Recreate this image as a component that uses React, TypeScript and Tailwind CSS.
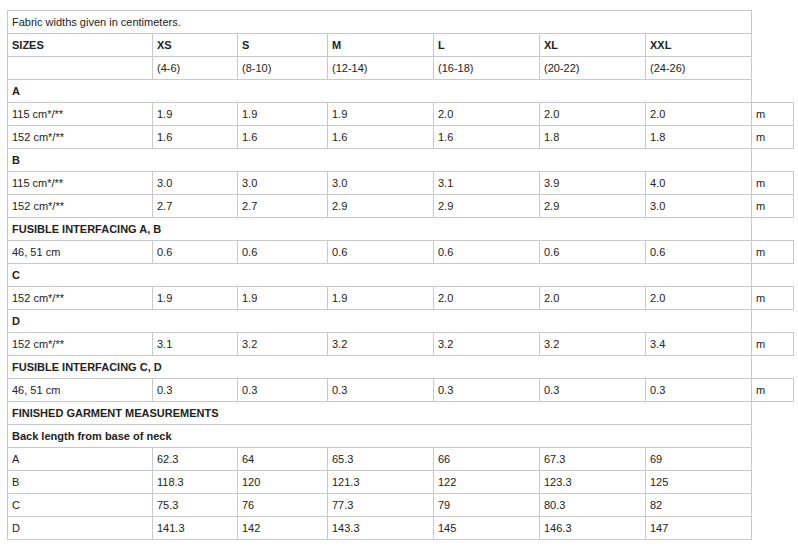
import React from 'react';

type Row =
  | { kind: 'title'; text: string }
  | { kind: 'section'; text: string }
  | { kind: 'data'; label: string; values: string[]; unit?: string; bold?: boolean };

const sizes = ['XS', 'S', 'M', 'L', 'XL', 'XXL'];
const ranges = ['(4-6)', '(8-10)', '(12-14)', '(16-18)', '(20-22)', '(24-26)'];

const rows: Row[] = [
  { kind: 'title', text: 'Fabric widths given in centimeters.' },
  { kind: 'data', label: 'SIZES', values: sizes, bold: true },
  { kind: 'data', label: '', values: ranges },
  { kind: 'section', text: 'A' },
  { kind: 'data', label: '115 cm*/**', values: ['1.9', '1.9', '1.9', '2.0', '2.0', '2.0'], unit: 'm' },
  { kind: 'data', label: '152 cm*/**', values: ['1.6', '1.6', '1.6', '1.6', '1.8', '1.8'], unit: 'm' },
  { kind: 'section', text: 'B' },
  { kind: 'data', label: '115 cm*/**', values: ['3.0', '3.0', '3.0', '3.1', '3.9', '4.0'], unit: 'm' },
  { kind: 'data', label: '152 cm*/**', values: ['2.7', '2.7', '2.9', '2.9', '2.9', '3.0'], unit: 'm' },
  { kind: 'section', text: 'FUSIBLE INTERFACING A, B' },
  { kind: 'data', label: '46, 51 cm', values: ['0.6', '0.6', '0.6', '0.6', '0.6', '0.6'], unit: 'm' },
  { kind: 'section', text: 'C' },
  { kind: 'data', label: '152 cm*/**', values: ['1.9', '1.9', '1.9', '2.0', '2.0', '2.0'], unit: 'm' },
  { kind: 'section', text: 'D' },
  { kind: 'data', label: '152 cm*/**', values: ['3.1', '3.2', '3.2', '3.2', '3.2', '3.4'], unit: 'm' },
  { kind: 'section', text: 'FUSIBLE INTERFACING C, D' },
  { kind: 'data', label: '46, 51 cm', values: ['0.3', '0.3', '0.3', '0.3', '0.3', '0.3'], unit: 'm' },
  { kind: 'section', text: 'FINISHED GARMENT MEASUREMENTS' },
  { kind: 'section', text: 'Back length from base of neck' },
  { kind: 'data', label: 'A', values: ['62.3', '64', '65.3', '66', '67.3', '69'] },
  { kind: 'data', label: 'B', values: ['118.3', '120', '121.3', '122', '123.3', '125'] },
  { kind: 'data', label: 'C', values: ['75.3', '76', '77.3', '79', '80.3', '82'] },
  { kind: 'data', label: 'D', values: ['141.3', '142', '143.3', '145', '146.3', '147'] },
];

const cell = 'border border-[#c9c9c9] h-[23px] pl-[4px] pr-1 py-0 align-middle whitespace-nowrap';

export default function App() {
  return (
    <div className="bg-white min-h-screen pt-[10px] pl-[7px] font-['Liberation_Sans',Arial,sans-serif] text-[11px] leading-[13px] text-[#222]">
      <table className="table-fixed border-collapse w-[786px]">
        <colgroup>
          <col className="w-[145px]" />
          <col className="w-[85px]" />
          <col className="w-[90px]" />
          <col className="w-[106px]" />
          <col className="w-[106px]" />
          <col className="w-[106px]" />
          <col className="w-[106px]" />
          <col className="w-[42px]" />
        </colgroup>
        <tbody>
          {rows.map((r, i) => {
            if (r.kind === 'title') {
              return (
                <tr key={i}>
                  <td colSpan={7} className={cell}>{r.text}</td>
                </tr>
              );
            }
            if (r.kind === 'section') {
              return (
                <tr key={i}>
                  <td colSpan={7} className={`${cell} font-bold`}>{r.text}</td>
                </tr>
              );
            }
            return (
              <tr key={i}>
                <td className={`${cell} ${r.bold ? 'font-bold' : ''}`}>{r.label}</td>
                {r.values.map((v, j) => (
                  <td key={j} className={`${cell} ${r.bold ? 'font-bold' : ''}`}>{v}</td>
                ))}
                {r.unit && <td className={cell}>{r.unit}</td>}
              </tr>
            );
          })}
        </tbody>
      </table>
    </div>
  );
}
